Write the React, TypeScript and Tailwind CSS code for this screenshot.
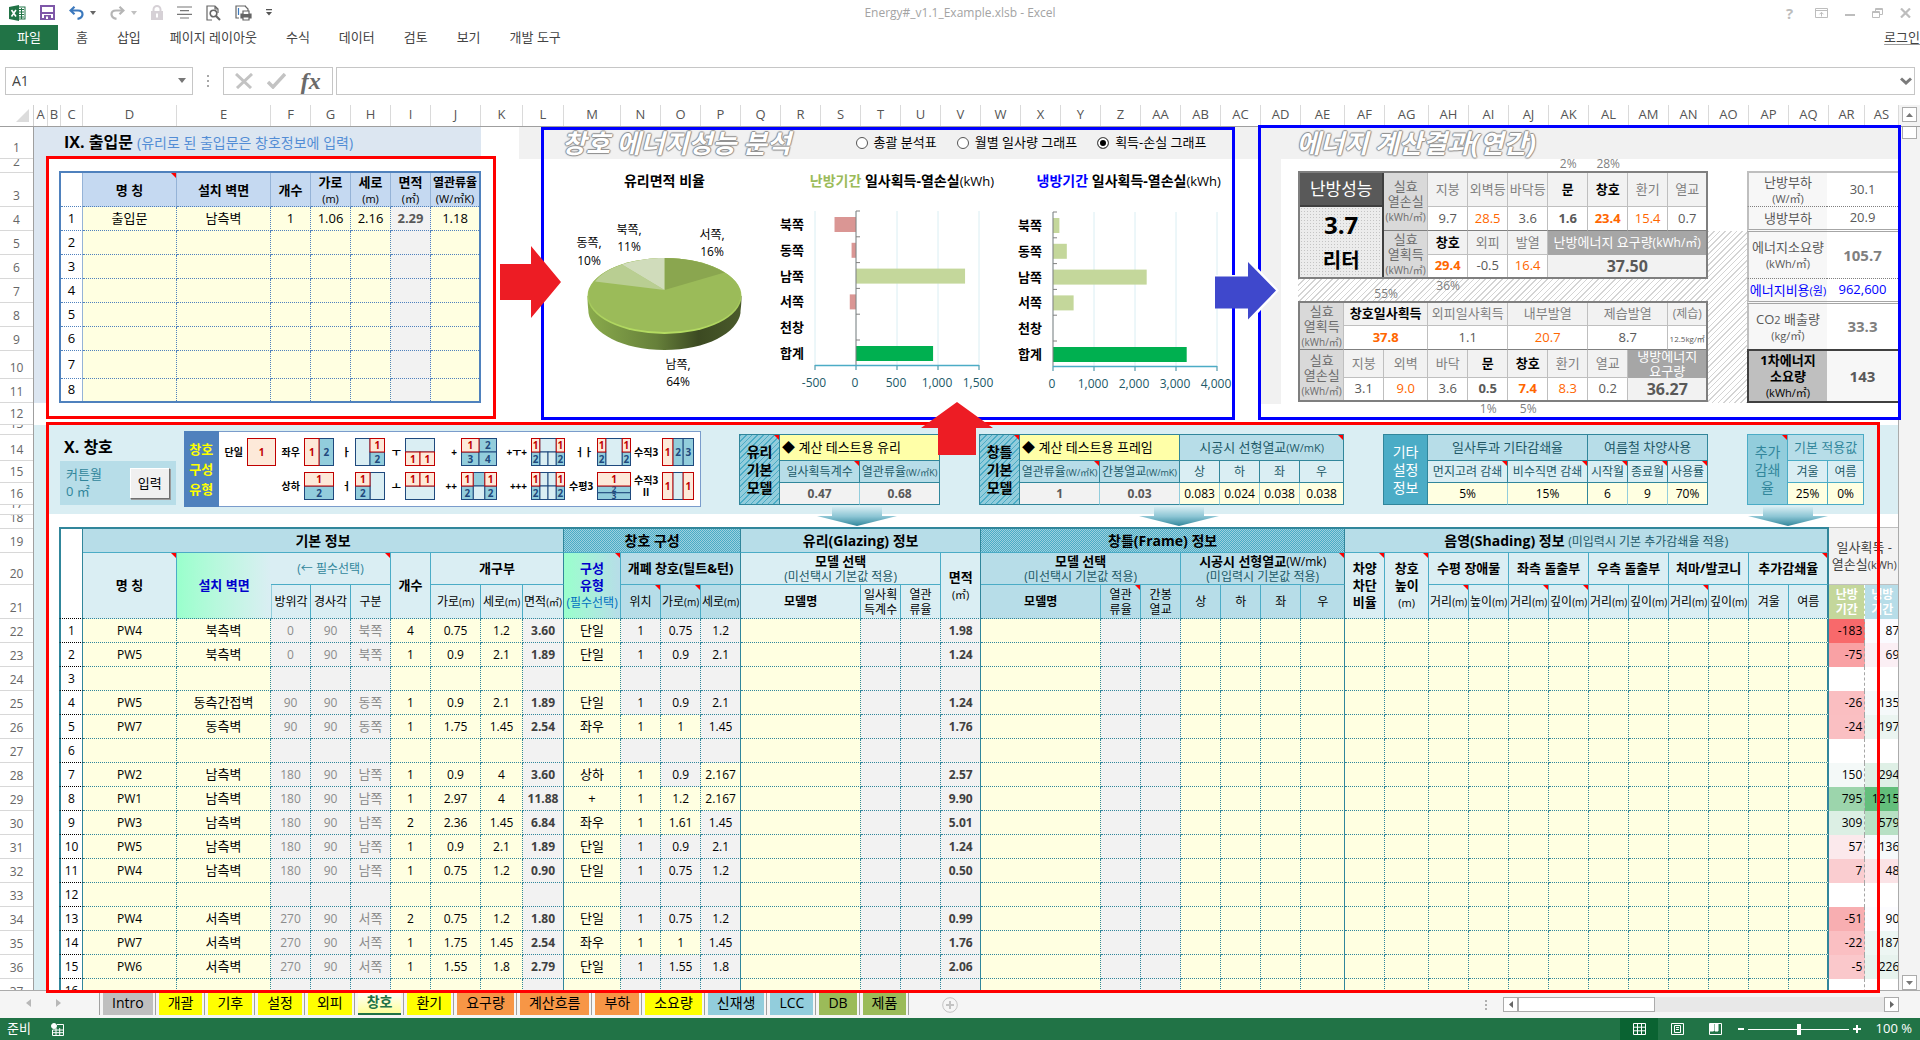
import React from "react";
import type { ReactNode } from "react";

/* ---------- shared table ---------- */

type Cell = {
  t?: ReactNode;
  cs?: number;
  rs?: number;
  c?: string;
  bold?: boolean;
  head?: boolean;
  note?: boolean;
};
type Row = { h: number; cells: Cell[] };

function NoteMark() {
  return (
    <svg className="absolute top-0 right-0 h-[5px] w-[5px]" viewBox="0 0 5 5" aria-hidden="true">
      <path d="M0 0h5v5z" fill="#ff0000" />
    </svg>
  );
}

function Grid({ cols, rows, className = "", label }: { cols: number[]; rows: Row[]; className?: string; label: string }) {
  return (
    <table aria-label={label} className={"w-full table-fixed border-separate border-spacing-0 text-center whitespace-nowrap " + className}>
      <colgroup>
        {cols.map((w, i) => (
          <col key={i} style={{ width: w }} />
        ))}
      </colgroup>
      <tbody>
        {rows.map((r, i) => (
          <tr key={i} style={{ height: r.h }}>
            {r.cells.map((cell, j) => {
              const Tag = cell.head ? "th" : "td";
              return (
                <Tag
                  key={j}
                  colSpan={cell.cs}
                  rowSpan={cell.rs}
                  className={"relative overflow-hidden p-0 align-middle " + (cell.bold ? "font-bold " : "font-normal ") + (cell.c || "")}
                >
                  {cell.t}
                  {cell.note && <NoteMark />}
                </Tag>
              );
            })}
          </tr>
        ))}
      </tbody>
    </table>
  );
}

const Lines = ({ of }: { of: ReactNode[] }) => (
  <>
    {of.map((l, i) => (
      <span key={i} className="block">
        {l}
      </span>
    ))}
  </>
);
const Sm = ({ children }: { children: ReactNode }) => <span className="text-[11px] leading-none font-normal">{children}</span>;
const Xs = ({ children }: { children: ReactNode }) => <span className="text-[9px] leading-none font-normal">{children}</span>;

/* ---------- window chrome ---------- */

function QuickAccess() {
  return (
    <div className="flex items-center gap-[14px] pl-2">
      <svg width="18" height="18" viewBox="0 0 18 18">
        <rect x="8" y="3" width="9" height="12" fill="#fff" stroke="#217346" />
        <path d="M11 5.5h5M11 8h5M11 10.5h5M11 13h5M13.5 4v11" stroke="#217346" />
        <path d="M1 3l10-2v16L1 15z" fill="#217346" />
        <path d="M3.5 6l4.5 6.5M8 6l-4.5 6.5" stroke="#fff" strokeWidth="1.6" />
      </svg>
      <svg width="15" height="15" viewBox="0 0 15 15">
        <path d="M1 1h13v13H1z" fill="#fff" stroke="#7e57a8" strokeWidth="2" />
        <path d="M1 8h13" stroke="#7e57a8" strokeWidth="2" />
        <path d="M4 10h7v5H4z" fill="#7e57a8" />
        <path d="M6 11.5h2V14H6z" fill="#fff" />
      </svg>
      <div className="flex items-center gap-1.5">
        <svg width="15" height="14" viewBox="0 0 15 14" fill="none" stroke="#3b78bd" strokeWidth="2.2">
          <path d="M5.5 0.8L1.5 4.5l4 3.8M2 4.5h7c3 0 4.5 1.5 4.5 3.8s-1.5 4-5 4.5" />
        </svg>
        <svg width="6" height="4" viewBox="0 0 6 4">
          <path d="M0 0h6L3 4z" fill="#666" />
        </svg>
      </div>
      <div className="flex items-center gap-1.5">
        <svg width="15" height="14" viewBox="0 0 15 14" fill="none" stroke="#b5b5b5" strokeWidth="2.2">
          <path d="M9.5 0.8l4 3.7-4 3.8M13 4.5H6C3 4.5 1.5 6 1.5 8.3s1.5 4 5 4.5" />
        </svg>
        <svg width="6" height="4" viewBox="0 0 6 4">
          <path d="M0 0h6L3 4z" fill="#c0c0c0" />
        </svg>
      </div>
      <svg width="12" height="15" viewBox="0 0 12 15">
        <path d="M2.5 7V4.5a3.5 3.5 0 017 0V7" fill="none" stroke="#d6d1d6" strokeWidth="2" />
        <rect y="6" width="12" height="9" fill="#d6d1d6" />
        <path d="M6 8.5v4" stroke="#fff" strokeWidth="2" />
      </svg>
      <svg width="15" height="13" viewBox="0 0 15 13" stroke="#777" strokeWidth="1.2">
        <path d="M0 1h15M3 4.7h9M0 8.4h15M3 12h9" />
      </svg>
      <svg width="15" height="16" viewBox="0 0 15 16" fill="none" stroke="#666" strokeWidth="1.2">
        <path d="M6 15H1V1h8l3 3v4M9 1v3h3" />
        <circle cx="7.5" cy="8.5" r="3.3" strokeWidth="1.6" />
        <path d="M10 11l4 4" strokeWidth="2.2" />
      </svg>
      <svg width="17" height="16" viewBox="0 0 17 16" fill="none" stroke="#666" strokeWidth="1.2">
        <path d="M4 13H1V1h6M10 1l3 3v2M7 1h4" />
        <path d="M3.5 3v7" stroke="#3b78bd" />
        <path d="M6 9h10v4H6z" fill="#666" />
        <path d="M8 9V6h6v3M8 12h6v3H8z" fill="#fff" />
      </svg>
      <svg width="6" height="7" viewBox="0 0 6 7">
        <path d="M0 0h6v1.2H0zM0 3h6L3 6.5z" fill="#555" />
      </svg>
    </div>
  );
}

function WindowIcons() {
  return (
    <div className="flex items-center gap-[17px] pr-[9px] text-[#bdbdbd]">
      <span className="w-3 text-[15px] leading-4 font-bold">?</span>
      <svg width="13" height="10" viewBox="0 0 13 10" fill="none" stroke="currentColor">
        <path d="M.5.5h12v9H.5zM.5 2.5h12M6.5 8.5v-4M4.5 6.3l2-2 2 2" />
      </svg>
      <svg width="10" height="10" viewBox="0 0 10 10">
        <path d="M0 6h10v2H0z" fill="currentColor" />
      </svg>
      <svg width="11" height="10" viewBox="0 0 11 10" fill="none" stroke="currentColor">
        <path d="M.5 3.5h7v6h-7zM.5 4.5h7M3.5 3.5v-3h7v6h-3M3.5 1.5h7" />
      </svg>
      <svg width="11" height="10" viewBox="0 0 11 10" fill="none" stroke="currentColor" strokeWidth="2.2">
        <path d="M1 .5l9 9M10 .5l-9 9" />
      </svg>
    </div>
  );
}

const MENUS = ["홈", "삽입", "페이지 레이아웃", "수식", "데이터", "검토", "보기", "개발 도구"];

function Chrome() {
  return (
    <header>
      <div className="relative flex h-[25px] items-center justify-between">
        <QuickAccess />
        <div className="absolute inset-x-0 text-center text-[12px] text-[#a3a3a3]">Energy#_v1.1_Example.xlsb - Excel</div>
        <WindowIcons />
      </div>
      <nav className="flex h-[25px] items-center gap-[29px] overflow-hidden text-[13px] text-[#444]">
        <button className="-mr-[11px] h-full bg-[#217346] px-[17px] text-white">파일</button>
        {MENUS.map((m) => (
          <button key={m} className="whitespace-nowrap">
            {m}
          </button>
        ))}
        <a href="#login" className="ml-auto whitespace-nowrap text-[#444] underline decoration-[#999] underline-offset-2">
          로그인
        </a>
      </nav>
      <div className="flex h-[55px] items-center px-[5px] pt-1.5">
        <div className="flex h-7 w-[188px] items-center border border-[#c6c6c6]">
          <input aria-label="이름 상자" defaultValue="A1" className="w-full min-w-0 pl-1.5 text-[14px] text-[#444] outline-none" />
          <svg width="8" height="5" viewBox="0 0 8 5" className="mr-1.5 shrink-0">
            <path d="M0 0h8L4 5z" fill="#777" />
          </svg>
        </div>
        <svg width="30" height="12" viewBox="0 0 30 12">
          <path d="M14 0h2v2h-2zM14 5h2v2h-2zM14 10h2v2h-2z" fill="#a8a8a8" />
        </svg>
        <div className="flex h-7 w-[110px] items-center justify-around border border-[#c6c6c6] px-1">
          <button aria-label="취소">
            <svg width="18" height="16" viewBox="0 0 18 16" stroke="#c3c3c3" strokeWidth="3" fill="none">
              <path d="M1 1l15 14M17 1L2 15" />
            </svg>
          </button>
          <button aria-label="입력">
            <svg width="19" height="16" viewBox="0 0 19 16" stroke="#c3c3c3" strokeWidth="3.5" fill="none">
              <path d="M1 9l5 5L18 1" />
            </svg>
          </button>
          <button aria-label="함수 삽입" className="font-['Liberation_Serif',serif] text-[24px] leading-6 font-bold text-[#6a6a6a] italic">
            fx
          </button>
        </div>
        <div className="ml-[3px] flex h-7 flex-1 items-center border border-[#c6c6c6]">
          <input aria-label="수식 입력줄" className="w-full min-w-0 px-2 text-[13px] outline-none" />
          <svg width="12" height="8" viewBox="0 0 12 8" className="mr-0.5 shrink-0" fill="none" stroke="#7b7b7b" strokeWidth="3">
            <path d="M1 1.5l5 4.5 5-4.5" />
          </svg>
        </div>
      </div>
    </header>
  );
}

/* ---------- sheet headings ---------- */

const COLUMNS: [string, number][] = [
  ["A", 14], ["B", 13], ["C", 22], ["D", 94], ["E", 94], ["F", 40], ["G", 40], ["H", 40], ["I", 40], ["J", 50],
  ["K", 42], ["L", 41], ["M", 57], ["N", 40], ["O", 40], ["P", 40], ["Q", 40], ["R", 40], ["S", 40], ["T", 40],
  ["U", 40], ["V", 40], ["W", 40], ["X", 40], ["Y", 40], ["Z", 40], ["AA", 40], ["AB", 40], ["AC", 40], ["AD", 40],
  ["AE", 44], ["AF", 40], ["AG", 44], ["AH", 40], ["AI", 40], ["AJ", 40], ["AK", 40], ["AL", 40], ["AM", 40], ["AN", 40],
  ["AO", 40], ["AP", 40], ["AQ", 40], ["AR", 36], ["AS", 34],
];
const ROW_HEIGHTS = [32, 14, 34, 24, 24, 24, 24, 24, 24, 28, 24, 22, 10, 26, 22, 22, 10, 14, 24, 32, 34];

function ColumnHeads() {
  return (
    <div className="flex h-[22px] shrink-0 border-b border-[#9f9f9f]">
      <div className="flex w-[34px] shrink-0 items-end justify-end border-r border-[#d0d0d0] p-1">
        <svg width="13" height="13" viewBox="0 0 13 13">
          <path d="M13 0v13H0z" fill="#dcdcdc" />
        </svg>
      </div>
      <div className="grid flex-1" style={{ gridTemplateColumns: COLUMNS.map(([, w]) => `minmax(0,${w}fr)`).join(" ") }}>
        {COLUMNS.map(([n]) => (
          <div key={n} className="border-r border-[#dadada] text-center text-[13px] leading-[18px] text-[#555]">
            {n}
          </div>
        ))}
      </div>
      <div className="flex w-[21px] shrink-0 justify-center bg-[#f3f3f3] pt-0.5">
        <button aria-label="위로" className="flex h-[15px] w-[15px] items-center justify-center border border-[#ababab] bg-white">
          <svg width="7" height="4" viewBox="0 0 7 4">
            <path d="M0 4h7L3.5 0z" fill="#777" />
          </svg>
        </button>
      </div>
    </div>
  );
}

function RowHeads() {
  return (
    <div className="w-[34px] shrink-0 overflow-hidden border-r border-[#9f9f9f]">
      {Array.from({ length: 37 }, (_, i) => (
        <div
          key={i}
          className="flex items-end justify-center overflow-hidden border-b border-[#d8d8d8] text-[12px] leading-[20px] text-[#666]"
          style={{ height: ROW_HEIGHTS[i] ?? 24 }}
        >
          {i + 1}
        </div>
      ))}
    </div>
  );
}

/* ---------- IX. doors ---------- */

const DH = "bg-[#c5d9f1] border-r border-b border-r-[#95b3d7] border-b-[#4f81bd] [border-bottom-style:dotted] text-[13px] leading-[16px]";
const DN = "bg-white border-r border-b border-r-[#95b3d7] border-b-[#4f81bd] [border-bottom-style:dotted] text-[13px]";
const DY = "bg-[#ffffe1] border-r border-b border-dotted border-[#4f81bd] text-[13px]";
const DG = "bg-[#f2f2f2] border-r border-b border-dotted border-[#4f81bd] text-[13px] text-[#595959]";

function DoorPanel() {
  const values = ["출입문", "남측벽", "1", "1.06", "2.16", "2.29", "1.18"];
  const rows: Row[] = [
    {
      h: 34,
      cells: [
        { c: DN },
        { t: "명 칭", c: DH, bold: true, head: true, note: true },
        { t: "설치 벽면", c: DH, bold: true, head: true },
        { t: "개수", c: DH, bold: true, head: true },
        { t: <Lines of={["가로", <Sm>(m)</Sm>]} />, c: DH, bold: true, head: true },
        { t: <Lines of={["세로", <Sm>(m)</Sm>]} />, c: DH, bold: true, head: true },
        { t: <Lines of={["면적", <Sm>(㎡)</Sm>]} />, c: DH, bold: true, head: true },
        { t: <Lines of={[<span className="text-[12px] leading-none">열관류율</span>, <Sm>(W/㎡K)</Sm>]} />, c: DH, bold: true, head: true },
      ],
    },
    ...Array.from({ length: 8 }, (_, i) => ({
      h: i === 6 ? 28 : i === 7 ? 22 : 24,
      cells: [
        { t: i + 1, c: DN },
        ...values.map((v, j) => ({ t: i === 0 ? v : "", c: j === 5 ? DG : DY, bold: j === 5 })),
      ],
    })),
  ];
  return (
    <section className="relative flex flex-col">
      <div className="flex min-h-0 flex-1 pb-[22px]">
        <div className="w-[14px] shrink-0 bg-[#dce6f1]" />
        <div className="min-w-0 flex-1">
          <h2 className="h-8 bg-[#dce6f1] pl-4 text-[16px] leading-[30px] font-bold whitespace-nowrap">
            IX. 출입문 <span className="text-[14px] font-normal text-[#538dd5]">(유리로 된 출입문은 창호정보에 입력)</span>
          </h2>
          <div className="pt-3 pl-[11px]">
            <Grid
              label="출입문"
              cols={[22, 94, 94, 40, 40, 40, 40, 48]}
              rows={rows}
              className="border-2 border-[#4f81bd] [&_td:last-child]:border-r-0 [&_th:last-child]:border-r-0 [&_tr:last-child_td]:border-b-0"
            />
          </div>
        </div>
      </div>
      <div className="pointer-events-none absolute top-[29px] -right-[15px] bottom-1.5 left-3 border-3 border-[#ff0000]" />
      <svg className="absolute top-[119px] -right-[80px] z-20 h-[72px] w-[61px]" viewBox="0 0 61 72">
        <path d="M0 18h31V0l30 36-30 36V54H0z" fill="#ed1c24" />
      </svg>
    </section>
  );
}

/* ---------- analysis charts ---------- */

const ORIENT = ["북쪽", "동쪽", "남쪽", "서쪽", "천창", "합계"];

function BarChart({ values, ticks, min, max, label }: { values: number[]; ticks: string[]; min: number; max: number; label: string }) {
  const left = 46;
  const width = 164;
  const x = (v: number) => left + ((v - min) / (max - min)) * width;
  const color = (v: number, i: number) => (i === 5 ? "#00b050" : v < 0 ? "#da9694" : "#c4d79b");
  return (
    <svg width="226" height="186" viewBox="0 0 226 186" role="img" aria-label={label} className="overflow-visible">
      {ticks.map((t, i) => {
        const tx = left + (i * width) / (ticks.length - 1);
        return (
          <g key={t}>
            <path d={`M${tx} 2v154`} stroke="#daeef3" />
            <path d={`M${tx} 156v5`} stroke="#31869b" />
            <text x={tx - 1} y="178" textAnchor="middle" fontSize="12" fill="#215967">
              {t}
            </text>
          </g>
        );
      })}
      {values.map((v, i) => (
        <rect key={i} x={Math.min(x(0), x(v))} y={8 + i * 25.8} width={Math.abs(x(v) - x(0))} height="15" fill={color(v, i)} />
      ))}
      <path d={`M${x(0)} 2v154` + [0, 1, 2, 3, 4, 5].map((i) => `M${x(0)} ${2 + i * 25.8}h4`).join("")} stroke="#808080" />
      <path d={`M${left} 156.5h${width}`} stroke="#4bacc6" strokeWidth="1.5" />
      {ORIENT.map((o, i) => (
        <text key={o} x="23" y={20 + i * 25.8} textAnchor="middle" fontSize="13" fontWeight="bold">
          {o}
        </text>
      ))}
    </svg>
  );
}

function PieChart() {
  return (
    <svg width="180" height="176" viewBox="0 0 180 176" role="img" aria-label="유리면적 비율" fontSize="12" textAnchor="middle" className="overflow-visible">
      <defs>
        <linearGradient id="side" x1="0" x2="1">
          <stop offset="0" stopColor="#8aab4c" />
          <stop offset="0.45" stopColor="#66803a" />
          <stop offset="0.72" stopColor="#3c4a22" />
          <stop offset="1" stopColor="#4a5a2b" />
        </linearGradient>
        <linearGradient id="rim" x1="0" y1="0" x2="0" y2="1">
          <stop offset="0.3" stopColor="#9bbb59" />
          <stop offset="1" stopColor="#b5dd62" />
        </linearGradient>
      </defs>
      <path d="M17.5 94c0 10 1 13 1 17 3 20 34 37 76 37s73-17 76-37c0-4 1-7 1-17z" fill="url(#side)" />
      <ellipse cx="94.5" cy="94" rx="77" ry="38" fill="url(#rim)" />
      <ellipse cx="94.5" cy="93" rx="76" ry="37" fill="#9bbb59" />
      <path d="M94.5 88V56c24 0 44 5 60 14.5z" fill="#8aa64f" />
      <path d="M94.5 88L25 79.5c5-7 14-12.5 27-17z" fill="#b9ce92" />
      <path d="M94.5 88L52 62.5C64 58.5 79 56 94.5 56z" fill="#d0dcbb" />
      <text x="19" y="45">동쪽,</text>
      <text x="19" y="63">10%</text>
      <text x="59" y="32">북쪽,</text>
      <text x="59" y="49">11%</text>
      <text x="142" y="37">서쪽,</text>
      <text x="142" y="54">16%</text>
      <text x="108" y="167">남쪽,</text>
      <text x="108" y="184">64%</text>
    </svg>
  );
}

const SHAPE_TEXT =
  "text-[26px] leading-8 font-bold italic whitespace-nowrap text-white [text-shadow:1px_0_1px_#8c8c8c,-1px_0_1px_#8c8c8c,0_1px_1px_#8c8c8c,0_-1px_1px_#8c8c8c]";

function AnalysisPanel() {
  const options = ["총괄 분석표", "월별 일사량 그래프", "획득-손실 그래프"];
  return (
    <section className="relative flex flex-col">
      <div className="flex h-8 items-center bg-[#f1f1f1] pl-[43px]">
        <h2 className={SHAPE_TEXT}>창호 에너지성능 분석</h2>
        <fieldset className="flex flex-1 items-center justify-end gap-5 pr-[54px]">
          {options.map((o, i) => (
            <label key={o} className="flex items-center gap-1.5 text-[13px] whitespace-nowrap">
              <input
                type="radio"
                name="view"
                defaultChecked={i === 2}
                className="h-3 w-3 appearance-none rounded-full border border-[#555] bg-white checked:bg-black checked:shadow-[inset_0_0_0_2px_white]"
              />
              {o}
            </label>
          ))}
        </fieldset>
      </div>
      <div className="grid flex-1 grid-cols-[250fr_238fr_254fr]">
        <figure className="flex flex-col items-start pt-3 pl-[51px]">
          <figcaption className="mb-[11px] w-full pl-[54px] text-[14px] leading-5 font-bold">유리면적 비율</figcaption>
          <PieChart />
        </figure>
        <figure className="pt-3">
          <figcaption className="mb-[18px] pl-[41px] text-[14px] leading-5 font-bold whitespace-nowrap">
            <span className="text-[#9bbb59]">난방기간</span> 일사획득-열손실<span className="text-[13px] font-normal">(kWh)</span>
          </figcaption>
          <BarChart label="난방기간 일사획득-열손실" values={[-262, -54, 1330, -76, 0, 940]} ticks={["-500", "0", "500", "1,000", "1,500"]} min={-500} max={1500} />
        </figure>
        <figure className="pt-3">
          <figcaption className="mb-[19px] pl-[30px] text-[14px] leading-5 font-bold whitespace-nowrap">
            <span className="text-[#0000ff]">냉방기간</span> 일사획득-열손실<span className="text-[13px] font-normal">(kWh)</span>
          </figcaption>
          <BarChart label="냉방기간 일사획득-열손실" values={[156, 337, 2285, 503, 0, 3261]} ticks={["0", "1,000", "2,000", "3,000", "4,000"]} min={0} max={4000} />
        </figure>
      </div>
      <div className="pointer-events-none absolute top-0 right-[25px] bottom-[5px] left-[22px] border-3 border-[#0000ff]" />
      <svg className="absolute top-[275px] left-[402px] z-20 h-[53px] w-[72px]" viewBox="0 0 72 53">
        <path d="M36 0l36 26H55v27H17V26H0z" fill="#ed1c24" />
      </svg>
    </section>
  );
}

/* ---------- yearly results ---------- */

const B = "border-r border-b border-[#bfbfbf] text-[13px] ";
const RH = B + "bg-[#f2f2f2] text-[#7f7f7f]";
const RHB = B + "bg-[#f2f2f2] text-black";
const RV = B + "bg-white text-[#595959]";
const RO = B + "bg-white text-[#ff6600]";
const RL = B + "bg-[#d9d9d9] text-[#6c6c6c] leading-[15px]";
const MID = " border-b-[#7f7f7f]";

const side = (a: string, b: string) => <Lines of={[a, b, <span className="text-[10px] leading-none">(kWh/㎡)</span>]} />;
const FLAT = "border-2 border-[#7f7f7f] [&_td:last-child]:border-r-0 [&_th:last-child]:border-r-0 [&_tr:last-child_td]:border-b-0";
const HATCH = "bg-[repeating-linear-gradient(135deg,#d4d4d4_0_1px,#ffffff_1px_4px)]";

const HEATING: Row[] = [
  {
    h: 34,
    cells: [
      { t: "난방성능", c: "border-r-2 border-b-2 border-[#3f3f3f] bg-[#595959] text-[17px] text-white", head: true },
      { t: side("실효", "열손실"), rs: 2, c: RL + MID },
      { t: "지붕", c: RH }, { t: "외벽등", c: RH }, { t: "바닥등", c: RH }, { t: "문", c: RHB, bold: true },
      { t: "창호", c: RHB, bold: true }, { t: "환기", c: RH }, { t: "열교", c: RH },
    ],
  },
  {
    h: 24,
    cells: [
      {
        t: <Lines of={["3.7", <span className="text-[20px] leading-none">리터</span>]} />,
        rs: 3,
        bold: true,
        c: "border-r-2 border-[#3f3f3f] bg-[radial-gradient(#c4c4c4_30%,#ececec_32%)] bg-[length:3px_3px] text-[24px] leading-[34px]",
      },
      { t: "9.7", c: RV + MID }, { t: "28.5", c: RO + MID }, { t: "3.6", c: RV + MID }, { t: "1.6", c: RV + MID, bold: true },
      { t: "23.4", c: RO + MID, bold: true }, { t: "15.4", c: RO + MID }, { t: "0.7", c: RV + MID },
    ],
  },
  {
    h: 24,
    cells: [
      { t: side("실효", "열획득"), rs: 2, c: RL + " border-b-0" },
      { t: "창호", c: RHB, bold: true }, { t: "외피", c: RH }, { t: "발열", c: RH },
      { t: <>난방에너지 요구량<span className="text-[12px]">(kWh/㎡)</span></>, cs: 4, c: "bg-[#a6a6a6] text-[13px] text-white" },
    ],
  },
  {
    h: 22,
    cells: [
      { t: "29.4", c: RO, bold: true }, { t: "-0.5", c: RV }, { t: "16.4", c: RO },
      { t: "37.50", cs: 4, c: "bg-[#f2f2f2] text-[16px] leading-5 text-[#595959]", bold: true },
    ],
  },
];

const COOLING: Row[] = [
  {
    h: 23,
    cells: [
      { t: side("실효", "열획득"), rs: 2, c: RL + MID },
      { t: "창호일사획득", cs: 2, c: RHB, bold: true }, { t: "외피일사획득", cs: 2, c: RH }, { t: "내부발열", cs: 2, c: RH },
      { t: "제습발열", cs: 2, c: RH }, { t: <span className="text-[12px]">(제습)</span>, c: RH },
    ],
  },
  {
    h: 24,
    cells: [
      { t: "37.8", cs: 2, c: RO + MID, bold: true }, { t: "1.1", cs: 2, c: RV + MID }, { t: "20.7", cs: 2, c: RO + MID },
      { t: "8.7", cs: 2, c: RV + MID }, { t: <span className="text-[8px]">12.5kg/㎡</span>, c: RV + MID },
    ],
  },
  {
    h: 28,
    cells: [
      { t: side("실효", "열손실"), rs: 2, c: RL + " border-b-0" },
      { t: "지붕", c: RH }, { t: "외벽", c: RH }, { t: "바닥", c: RH }, { t: "문", c: RHB, bold: true },
      { t: "창호", c: RHB, bold: true }, { t: "환기", c: RH }, { t: "열교", c: RH },
      { t: <div className="flex h-[27px] flex-col justify-center overflow-hidden"><Lines of={["냉방에너지", "요구량"]} /></div>, cs: 2, c: "bg-[#a6a6a6] text-[13px] leading-[15px] text-white" },
    ],
  },
  {
    h: 22,
    cells: [
      { t: "3.1", c: RV }, { t: "9.0", c: RO }, { t: "3.6", c: RV }, { t: "0.5", c: RV, bold: true },
      { t: "7.4", c: RO, bold: true }, { t: "8.3", c: RO }, { t: "0.2", c: RV },
      { t: "36.27", cs: 2, c: "bg-[#f2f2f2] text-[16px] leading-5 text-[#595959]", bold: true },
    ],
  },
];

const SL = "border-l-2 border-l-[#bfbfbf] [border-left-style:solid] bg-[#f7f7f7] text-[13px] leading-[16px] text-[#595959] ";
const DOT = "border-b border-b-[#7f7f7f] [border-bottom-style:dotted] ";
const DBL = "border-b-[3px] border-b-[#a6a6a6] [border-bottom-style:double] ";

const SUMMARY: Row[] = [
  { h: 36, cells: [{ t: <Lines of={["난방부하", <Sm>(W/㎡)</Sm>]} />, c: SL + DOT + "border-t-2 border-t-[#bfbfbf]" }, { t: "30.1", c: DOT + "border-t-2 border-t-[#bfbfbf] text-[13px] text-[#595959]" }] },
  { h: 25, cells: [{ t: "냉방부하", c: SL + DBL }, { t: "20.9", c: DBL + "text-[13px] text-[#595959]" }] },
  { h: 47, cells: [{ t: <Lines of={["에너지소요량", <Sm>(kWh/㎡)</Sm>]} />, c: SL + DOT }, { t: "105.7", c: DOT + "text-[15px] text-[#7f7f7f]", bold: true }] },
  { h: 25, cells: [{ t: <>에너지비용<Sm>(원)</Sm></>, c: SL + DBL + "text-[#0000ff]!" }, { t: "962,600", c: DBL + "text-[13px] text-[#0000ff]" }] },
  { h: 45, cells: [{ t: <Lines of={[<>CO<Sm>2</Sm> 배출량</>, <Sm>(kg/㎡)</Sm>]} />, c: SL }, { t: "33.3", c: "text-[15px] text-[#7f7f7f]", bold: true }] },
  {
    h: 54,
    cells: [
      { t: <Lines of={["1차에너지", "소요량", <Sm>(kWh/㎡)</Sm>]} />, c: "border-y-2 border-l-2 border-[#404040] bg-[#bfbfbf] text-[13px] leading-[16px] text-black", bold: true },
      { t: "143", c: "border-y-2 border-[#404040] bg-[#f7f7f7] text-[15px] text-[#595959]", bold: true },
    ],
  },
];

function ResultPanel() {
  const pct = "text-[12px] leading-[14px] text-[#7f7f7f] text-center";
  return (
    <section className="relative flex flex-col">
      <div className="flex h-8 items-center bg-[#f1f1f1] pl-[36px]">
        <h2 className={SHAPE_TEXT}>에너지 계산결과(연간)</h2>
      </div>
      <div className="grid flex-1 grid-cols-[21fr_17fr_410fr_39fr_151fr]">
        <div className="mb-[21px] bg-[#f1f1f1]" />
        <div />
        <div>
          <div className="grid h-3 grid-cols-[250fr_40fr_40fr_80fr]">
            <span />
            <span className={"-mt-0.5 " + pct}>2%</span>
            <span className={"-mt-0.5 " + pct}>28%</span>
          </div>
          <Grid label="난방성능" cols={[84, 44, 40, 40, 40, 40, 40, 40, 38]} rows={HEATING} className={FLAT} />
          <div className={"grid h-[22px] grid-cols-[68fr_40fr_22fr_40fr_240fr] " + HATCH}>
            <span />
            <span className={"self-end " + pct}>55%</span>
            <span />
            <span className={pct}>36%</span>
          </div>
          <Grid label="냉방성능" cols={[44, 40, 44, 40, 40, 40, 40, 40, 40, 38]} rows={COOLING} className={FLAT} />
          <div className="grid grid-cols-[170fr_40fr_40fr_160fr]">
            <span />
            <span className={pct}>1%</span>
            <span className={pct}>5%</span>
          </div>
        </div>
        <div className={"mt-[72px] mb-[22px] " + HATCH} />
        <div className="pt-3">
          <Grid label="부하 및 소요량" cols={[80, 71]} rows={SUMMARY} />
        </div>
      </div>
      <div className="pointer-events-none absolute -top-0.5 -right-[3px] bottom-[5px] -left-0.5 border-3 border-[#0000ff]" />
      <svg className="absolute top-[131px] -left-[45px] z-20 h-[66px] w-[64px]" viewBox="0 0 64 66">
        <path d="M0 17h33V0l31 32.5L33 66V49H0z" fill="#fff" />
        <path d="M0 18.5h33V4l28 28.5-28 29V50.5H0z" fill="#3f48cc" />
      </svg>
    </section>
  );
}

/* ---------- X. window types ---------- */

/* Pane: x, y, width, height as parts of 12, tone (r = opening, b = fixed, l = light) and number. */
type Pane = [number, number, number, number, "r" | "b" | "l", string?];
const TONE = { r: ["#fde9d9", "#c00000", "#c00000"], b: ["#92cddc", "#1f497d", "#1f497d"], l: ["#daeef3", "#1f497d", "#1f497d"] };

const TYPES: { label: ReactNode; w: number; panes: Pane[] }[] = [
  { label: "단일", w: 29, panes: [[0, 0, 12, 12, "r", "1"]] },
  { label: "좌우", w: 30, panes: [[6, 0, 6, 12, "b", "2"], [0, 0, 6, 12, "r", "1"]] },
  { label: "ㅏ", w: 30, panes: [[0, 0, 6, 12, "l"], [6, 6, 6, 6, "b", "2"], [6, 0, 6, 6, "r", "1"]] },
  { label: "ㅜ", w: 30, panes: [[0, 0, 12, 6, "l"], [0, 6, 6, 6, "r", "1"], [6, 6, 6, 6, "r", "1"]] },
  { label: "+", w: 36, panes: [[6, 0, 6, 6, "b", "2"], [0, 6, 6, 6, "b", "3"], [6, 6, 6, 6, "b", "4"], [0, 0, 6, 6, "r", "1"]] },
  { label: "+ㅜ+", w: 34, panes: [[3, 0, 6, 6, "l"], [3, 6, 3, 6, "l"], [6, 6, 3, 6, "l"], [0, 6, 3, 6, "b", "2"], [9, 6, 3, 6, "b", "2"], [0, 0, 3, 6, "r", "1"], [9, 0, 3, 6, "r", "1"]] },
  { label: "ㅓㅏ", w: 34, panes: [[3, 0, 6, 12, "l"], [0, 6, 3, 6, "b", "2"], [9, 6, 3, 6, "b", "2"], [0, 0, 3, 6, "r", "1"], [9, 0, 3, 6, "r", "1"]] },
  { label: "수직3", w: 32, panes: [[4, 0, 4, 12, "b", "2"], [8, 0, 4, 12, "b", "3"], [0, 0, 4, 12, "r", "1"]] },
  { label: "", w: 0, panes: [] },
  { label: "상하", w: 30, panes: [[0, 6, 12, 6, "b", "2"], [0, 0, 12, 6, "r", "1"]] },
  { label: "ㅓ", w: 30, panes: [[6, 0, 6, 12, "l"], [0, 6, 6, 6, "b", "2"], [0, 0, 6, 6, "r", "1"]] },
  { label: "ㅗ", w: 30, panes: [[0, 6, 12, 6, "l"], [0, 0, 6, 6, "r", "1"], [6, 0, 6, 6, "r", "1"]] },
  { label: "++", w: 36, panes: [[4, 0, 4, 6, "b"], [4, 6, 4, 6, "l"], [0, 6, 4, 6, "b", "2"], [8, 6, 4, 6, "b", "2"], [0, 0, 4, 6, "r", "1"], [8, 0, 4, 6, "r", "1"]] },
  { label: "+++", w: 34, panes: [[3, 0, 3, 6, "l"], [6, 0, 3, 6, "l"], [3, 6, 3, 6, "l"], [6, 6, 3, 6, "l"], [0, 6, 3, 6, "b", "2"], [9, 6, 3, 6, "b", "2"], [0, 0, 3, 6, "r", "1"], [9, 0, 3, 6, "r", "1"]] },
  { label: "수평3", w: 34, panes: [[0, 6, 12, 3, "b", "2"], [0, 9, 12, 3, "b", "3"], [0, 0, 12, 6, "r", "1"]] },
  { label: <Lines of={["수직3", "II"]} />, w: 32, panes: [[4, 0, 4, 12, "l"], [0, 0, 4, 12, "r", "1"], [8, 0, 4, 12, "r", "1"]] },
];

function WindowGlyph({ w, panes }: { w: number; panes: Pane[] }) {
  const ux = (w - 1) / 12;
  const uy = 27 / 12;
  return (
    <svg width={w} height="28" viewBox={`0 0 ${w} 28`} className="shrink-0">
      {panes.map(([x, y, pw, ph, tone, n], i) => (
        <g key={i}>
          <rect x={0.5 + x * ux} y={0.5 + y * uy} width={pw * ux} height={ph * uy} fill={TONE[tone][0]} stroke={TONE[tone][1]} />
          {n && (
            <text x={0.5 + (x + pw / 2) * ux} y={(ph < 6 ? 3.5 : 4.5) + (y + ph / 2) * uy} textAnchor="middle" fontSize={ph < 6 ? 8 : 10} fontWeight="bold" fill={TONE[tone][2]}>
              {n}
            </text>
          )}
        </g>
      ))}
    </svg>
  );
}

function TypeLegend() {
  return (
    <div className="mt-1.5 flex h-[76px] border border-[#7a9ccb] bg-white">
      <div className="-m-px flex w-[35px] shrink-0 flex-col justify-center bg-[#4f81bd] text-center text-[13px] leading-5 font-bold text-[#ffff00]">
        <span>창호</span>
        <span>구성</span>
        <span>유형</span>
      </div>
      <div className="grid flex-1 grid-cols-[58fr_58fr_51fr_50fr_62fr_68fr_66fr_63fr] gap-y-1.5 pt-1.5 pr-1.5 pb-1.5">
        {TYPES.map((t, i) => (
          <div key={i} className="flex items-center justify-end gap-1 text-center text-[10px] leading-3 font-bold whitespace-nowrap">
            <span>{t.label}</span>
            <WindowGlyph w={t.w} panes={t.panes} />
          </div>
        ))}
      </div>
    </div>
  );
}

/* ---------- default model tables ---------- */

const TB = "border-r border-b border-[#31869b] ";
const SOFT = "border-r border-b border-[#31869b] border-r-[#92cddc] ";
const DIAG = "border border-[#31869b] bg-[repeating-linear-gradient(135deg,#4bacc6_0_1px,#92cddc_1px_4px)] text-[14px] leading-[18px] text-black";
const H1 = "border-t bg-[#b7dde8] text-[13px] text-[#215967]";
const H2 = "bg-[#b7dde8] text-[12px] text-[#215967]";
const H3 = "bg-[#daeef3] text-[12px] text-[#215967]";
const VG = "bg-[#f2f2f2] text-[12px] text-[#595959]";
const VY = "bg-[#ffffe1] text-[12px] text-black";

function DownArrow({ className }: { className: string }) {
  return (
    <svg className={"absolute top-[82px] z-10 h-[19px] w-[80px] " + className} viewBox="0 0 80 19" aria-hidden="true">
      <defs>
        <linearGradient id="teal" x1="0" y1="0" x2="0" y2="1">
          <stop offset="0" stopColor="#d3ebf1" />
          <stop offset="0.5" stopColor="#8cc5d4" />
          <stop offset="1" stopColor="#31869b" />
        </linearGradient>
      </defs>
      <path d="M15 0h50v9h15L40 19 0 9h15z" fill="url(#teal)" />
    </svg>
  );
}

const GLAZING: Row[] = [
  {
    h: 27,
    cells: [
      { t: <Lines of={["유리", "기본", "모델"]} />, rs: 3, c: DIAG, note: true, head: true, bold: true },
      { t: "◆ 계산 테스트용 유리", cs: 2, c: TB + "border-t bg-[#ffffa8] pl-0.5 text-left text-[13px] text-black" },
    ],
  },
  { h: 22, cells: [{ t: "일사획득계수", c: TB + H2, note: true }, { t: <>열관류율<Xs>(W/㎡K)</Xs></>, c: TB + H2 }] },
  { h: 22, cells: [{ t: "0.47", c: SOFT + VG, bold: true }, { t: "0.68", c: TB + VG, bold: true }] },
];
const FRAME: Row[] = [
  {
    h: 27,
    cells: [
      { t: <Lines of={["창틀", "기본", "모델"]} />, rs: 3, c: DIAG, note: true, head: true, bold: true },
      { t: "◆ 계산 테스트용 프레임", cs: 2, c: TB + "border-t bg-[#ffffa8] pl-0.5 text-left text-[13px] text-black" },
      { t: <>시공시 선형열교<Sm>(W/mK)</Sm></>, cs: 4, c: TB + H1, note: true },
    ],
  },
  {
    h: 22,
    cells: [
      { t: <>열관류율<Xs>(W/㎡K)</Xs></>, c: TB + H2, note: true }, { t: <>간봉열교<Xs>(W/mK)</Xs></>, c: TB + H2 },
      { t: "상", c: TB + H3 }, { t: "하", c: TB + H3 }, { t: "좌", c: TB + H3 }, { t: "우", c: TB + H3 },
    ],
  },
  {
    h: 22,
    cells: [
      { t: "1", c: SOFT + VG, bold: true }, { t: "0.03", c: SOFT + VG, bold: true },
      { t: "0.083", c: SOFT + VY }, { t: "0.024", c: SOFT + VY }, { t: "0.038", c: SOFT + VY }, { t: "0.038", c: TB + VY },
    ],
  },
];
const MISC: Row[] = [
  {
    h: 27,
    cells: [
      { t: <Lines of={["기타", "설정", "정보"]} />, rs: 3, c: "border border-[#31869b] bg-[#4bacc6] text-[14px] leading-[18px] text-white", head: true },
      { t: "일사투과 기타감쇄율", cs: 2, c: TB + H1 }, { t: "여름철 차양사용", cs: 3, c: TB + H1 },
    ],
  },
  {
    h: 22,
    cells: ["먼지고려 감쇄", "비수직면 감쇄", "시작월", "종료월", "사용률"].map((t) => ({ t, c: TB + H3, note: true })),
  },
  { h: 22, cells: [{ t: "5%", c: SOFT + VY }, { t: "15%", c: TB + VY }, { t: "6", c: SOFT + VY }, { t: "9", c: SOFT + VY }, { t: "70%", c: TB + VY }] },
];
const EXTRA: Row[] = [
  {
    h: 27,
    cells: [
      { t: <Lines of={["추가", "감쇄", "율"]} />, rs: 3, c: "border border-[#4bacc6] bg-[#92cddc] text-[14px] leading-[18px] text-[#31869b]", note: true, head: true },
      { t: "기본 적용값", cs: 2, c: "border-t border-r border-b border-[#4bacc6] bg-[#b7dde8] text-[13px] text-[#31869b]" },
    ],
  },
  { h: 22, cells: [{ t: "겨울", c: "border-r border-b border-[#4bacc6] " + H3 }, { t: "여름", c: "border-r border-b border-[#4bacc6] " + H3 }] },
  { h: 22, cells: [{ t: "25%", c: "border-r border-b border-[#4bacc6] " + VY }, { t: "0%", c: "border-r border-b border-[#4bacc6] " + VY }] },
];

function ModelBand() {
  return (
    <div className="grid h-[89px] grid-cols-[150fr_518fr_38fr_201fr_39fr_365fr_39fr_325fr_39fr_117fr_34fr] bg-[#daeef3]">
      <div className="pr-2 pl-[26px]">
        <h2 className="pt-2 pl-1 text-[16px] leading-7 font-bold">X. 창호</h2>
        <div className="flex h-11 items-center justify-between bg-[#b7dde8] px-1.5 text-[13px] leading-[17px] text-[#31869b]">
          <span>
            커튼월
            <br />0 ㎡
          </span>
          <button className="h-[31px] w-10 border border-t-white border-r-[#707070] border-b-[#707070] border-l-white bg-[#f0f0f0] text-[13px] text-black shadow-[1px_1px_0_#9a9a9a]">
            입력
          </button>
        </div>
      </div>
      <TypeLegend />
      <div />
      <div className="relative pt-[9px]">
        <Grid label="유리 기본 모델" cols={[41, 80, 80]} rows={GLAZING} />
        <DownArrow className="left-[78px]" />
      </div>
      <div />
      <div className="relative pt-[9px]">
        <Grid label="창틀 기본 모델" cols={[41, 80, 80, 40, 40, 40, 44]} rows={FRAME} />
        <DownArrow className="left-[160px]" />
      </div>
      <div />
      <div className="pt-[9px]">
        <Grid label="기타 설정 정보" cols={[45, 80, 80, 40, 40, 40]} rows={MISC} />
      </div>
      <div />
      <div className="relative pt-[9px]">
        <Grid label="추가 감쇄율" cols={[41, 40, 36]} rows={EXTRA} />
        <DownArrow className="left-px" />
      </div>
    </div>
  );
}

/* ---------- main window table ---------- */

const TOP = "border-t-2 border-t-[#31869b] border-r border-r-[#31869b] border-b border-b-[#4bacc6] text-[14px] ";
const CHECK = "bg-[repeating-conic-gradient(#4bacc6_0_25%,#9ed0de_0_50%)] bg-[length:2px_2px]";
const HB = "border-r border-b border-[#4bacc6] text-[13px] leading-[17px] ";
const HX = "border-r border-b border-b-[#31869b] [border-bottom-style:dotted] border-r-[#4bacc6] text-[13px] leading-[17px] ";
const END = "border-r-[#31869b]! ";
const PALE = "bg-[#daeef3] ";
const MEDIUM = "bg-[#b7dde8] ";

const m = (a: string, u = "(m)") => (
  <span className="text-[12px]">
    {a}
    <span className="text-[10px]">{u}</span>
  </span>
);
const s12 = (t: ReactNode) => <span className="text-[12px] leading-[15px]">{t}</span>;

const MAIN_HEAD: Row[] = [
  {
    h: 26,
    cells: [
      { rs: 3, c: "border-t-2 border-l-2 border-r border-b border-[#31869b] [border-bottom-style:dotted] border-b-black bg-white" },
      { t: "기본 정보", cs: 9, c: TOP + MEDIUM, bold: true, head: true },
      { t: "창호 구성", cs: 4, c: TOP + CHECK, bold: true, head: true },
      { t: "유리(Glazing) 정보", cs: 4, c: TOP + MEDIUM, bold: true, head: true },
      { t: "창틀(Frame) 정보", cs: 7, c: TOP + CHECK, bold: true, head: true },
      { t: <>음영(Shading) 정보 <span className="text-[12px] font-normal text-[#215967]">(미입력시 기본 추가감쇄율 적용)</span></>, cs: 12, c: TOP + MEDIUM + "border-r-2", bold: true, head: true },
      {
        t: <Lines of={["일사획득 -", <>열손실<Sm>(kWh)</Sm></>]} />,
        cs: 2,
        rs: 2,
        c: "border-t border-b border-[#bfbfbf] bg-[#f2f2f2] text-[13px] leading-[17px] text-[#404040]",
      },
    ],
  },
  {
    h: 32,
    cells: [
      { t: "명 칭", rs: 2, c: HX + PALE, bold: true, head: true, note: true },
      { t: "설치 벽면", rs: 2, c: HX + "border-r-0 bg-linear-to-r from-[#99ffcc] to-[#daeef3] text-[#0000cc]", bold: true, head: true },
      { t: "(← 필수선택)", cs: 3, c: HB + PALE + "text-[12px]! text-[#31869b]", note: true, head: true },
      { t: "개수", rs: 2, c: HX + PALE, bold: true, head: true },
      { t: "개구부", cs: 3, c: HB + PALE + END, bold: true, head: true },
      {
        t: <Lines of={["구성", "유형", <span className="text-[12px] font-normal text-[#0070c0]">(필수선택)</span>]} />,
        rs: 2,
        c: HX + "bg-linear-to-r from-[#99ffcc] to-[#b7dde8] text-[#0000cc]",
        bold: true,
        head: true,
        note: true,
      },
      { t: "개폐 창호(틸트&턴)", cs: 3, c: HB + MEDIUM + END, bold: true, head: true },
      { t: <Lines of={[<b>모델 선택</b>, <span className="text-[12px] text-[#215967]">(미선택시 기본값 적용)</span>]} />, cs: 3, c: HB + PALE + "leading-[15px]!", head: true },
      { t: <Lines of={["면적", <Sm>(㎡)</Sm>]} />, rs: 2, c: HX + PALE + END, bold: true, head: true },
      { t: <Lines of={[<b>모델 선택</b>, <span className="text-[12px] text-[#215967]">(미선택시 기본값 적용)</span>]} />, cs: 3, c: HB + MEDIUM + "leading-[15px]!", head: true },
      {
        t: <Lines of={[<><b>시공시 선형열교</b><span className="text-[12px]">(W/mk)</span></>, <span className="text-[12px] text-[#215967]">(미입력시 기본값 적용)</span>]} />,
        cs: 4,
        c: HB + MEDIUM + END + "leading-[15px]!",
        head: true,
        note: true,
      },
      { t: <Lines of={["차양", "차단", "비율"]} />, rs: 2, c: HX + PALE, bold: true, head: true, note: true },
      { t: <Lines of={["창호", "높이", <Sm>(m)</Sm>]} />, rs: 2, c: HX + PALE, bold: true, head: true, note: true },
      { t: "수평 장애물", cs: 2, c: HB + PALE, bold: true, head: true },
      { t: "좌측 돌출부", cs: 2, c: HB + PALE, bold: true, head: true },
      { t: "우측 돌출부", cs: 2, c: HB + PALE, bold: true, head: true },
      { t: "처마/발코니", cs: 2, c: HB + PALE, bold: true, head: true },
      { t: "추가감쇄율", cs: 2, c: HB + PALE + END + "border-r-2", bold: true, head: true, note: true },
    ],
  },
  {
    h: 34,
    cells: [
      { t: s12("방위각"), c: HX + PALE + "border-l border-l-[#92cddc]", head: true },
      { t: s12("경사각"), c: HX + PALE, head: true },
      { t: s12("구분"), c: HX + PALE, head: true },
      { t: m("가로"), c: HX + PALE, head: true },
      { t: m("세로"), c: HX + PALE, head: true },
      { t: m("면적", "(㎡)"), c: HX + PALE + END, head: true },
      { t: s12("위치"), c: HX + MEDIUM, head: true, note: true },
      { t: m("가로"), c: HX + MEDIUM, head: true, note: true },
      { t: m("세로"), c: HX + MEDIUM + END, head: true },
      { t: s12("모델명"), c: HX + PALE, bold: true, head: true },
      { t: s12(<Lines of={["일사획", "득계수"]} />), c: HX + PALE + "leading-[15px]!", head: true },
      { t: s12(<Lines of={["열관", "류율"]} />), c: HX + PALE + "leading-[15px]!", head: true },
      { t: s12("모델명"), c: HX + MEDIUM, bold: true, head: true },
      { t: s12(<Lines of={["열관", "류율"]} />), c: HX + MEDIUM + "leading-[15px]!", head: true, note: true },
      { t: s12(<Lines of={["간봉", "열교"]} />), c: HX + MEDIUM + "leading-[15px]!", head: true },
      { t: s12("상"), c: HX + MEDIUM, head: true },
      { t: s12("하"), c: HX + MEDIUM, head: true },
      { t: s12("좌"), c: HX + MEDIUM, head: true },
      { t: s12("우"), c: HX + MEDIUM + END, head: true },
      { t: m("거리"), c: HX + PALE, head: true, note: true },
      { t: m("높이"), c: HX + PALE, head: true },
      { t: m("거리"), c: HX + PALE, head: true, note: true },
      { t: m("깊이"), c: HX + PALE, head: true, note: true },
      { t: m("거리"), c: HX + PALE, head: true },
      { t: m("깊이"), c: HX + PALE, head: true },
      { t: m("거리"), c: HX + PALE, head: true, note: true },
      { t: m("깊이"), c: HX + PALE, head: true },
      { t: s12("겨울"), c: HX + PALE, head: true },
      { t: s12("여름"), c: HX + PALE + END + "border-r-2", head: true },
      { t: s12(<Lines of={["난방", "기간"]} />), c: "border-r border-dashed border-white bg-[#c4d79b] leading-[15px] text-white", bold: true, head: true },
      { t: s12(<Lines of={["냉방", "기간"]} />), c: "bg-[#b7dde8] leading-[15px] text-white", bold: true, head: true },
    ],
  },
];

/* name, wall, azimuth, side, count, width, height, area, type, sash width, sash height, glass area, heating, cooling */
const WINDOWS: (string[] | null)[] = [
  ["PW4", "북측벽", "0", "북쪽", "4", "0.75", "1.2", "3.60", "단일", "0.75", "1.2", "1.98", "-183", "87"],
  ["PW5", "북측벽", "0", "북쪽", "1", "0.9", "2.1", "1.89", "단일", "0.9", "2.1", "1.24", "-75", "69"],
  null,
  ["PW5", "동측간접벽", "90", "동쪽", "1", "0.9", "2.1", "1.89", "단일", "0.9", "2.1", "1.24", "-26", "135"],
  ["PW7", "동측벽", "90", "동쪽", "1", "1.75", "1.45", "2.54", "좌우", "1", "1.45", "1.76", "-24", "197"],
  null,
  ["PW2", "남측벽", "180", "남쪽", "1", "0.9", "4", "3.60", "상하", "0.9", "2.167", "2.57", "150", "294"],
  ["PW1", "남측벽", "180", "남쪽", "1", "2.97", "4", "11.88", "+", "1.2", "2.167", "9.90", "795", "1215"],
  ["PW3", "남측벽", "180", "남쪽", "2", "2.36", "1.45", "6.84", "좌우", "1.61", "1.45", "5.01", "309", "579"],
  ["PW5", "남측벽", "180", "남쪽", "1", "0.9", "2.1", "1.89", "단일", "0.9", "2.1", "1.24", "57", "136"],
  ["PW4", "남측벽", "180", "남쪽", "1", "0.75", "1.2", "0.90", "단일", "0.75", "1.2", "0.50", "7", "48"],
  null,
  ["PW4", "서측벽", "270", "서쪽", "2", "0.75", "1.2", "1.80", "단일", "0.75", "1.2", "0.99", "-51", "90"],
  ["PW7", "서측벽", "270", "서쪽", "1", "1.75", "1.45", "2.54", "좌우", "1", "1.45", "1.76", "-22", "187"],
  ["PW6", "서측벽", "270", "서쪽", "1", "1.55", "1.8", "2.79", "단일", "1.55", "1.8", "2.06", "-5", "226"],
  null,
];

const HEAT_COLOR: Record<string, string> = {
  "-183": "bg-[#f8696b]", "-75": "bg-[#f9a1a4]", "-26": "bg-[#fabec1]", "-24": "bg-[#fabfc2]", "150": "bg-[#f4f9f8]",
  "795": "bg-[#9cd5ac]", "309": "bg-[#dcefe4]", "57": "bg-[#fbe9ec]", "7": "bg-[#facdd0]", "-51": "bg-[#f8aeb1]",
  "-22": "bg-[#fabfc2]", "-5": "bg-[#fac8cb]", "87": "bg-[#fbfbff]", "69": "bg-[#fbeff4]", "135": "bg-[#f5f9fa]",
  "197": "bg-[#ebf5f1]", "294": "bg-[#dff0e6]", "1215": "bg-[#63be7b]", "579": "bg-[#b7e0c4]", "136": "bg-[#f5f9fa]",
  "48": "bg-[#fbe3e6]", "90": "bg-[#fcfcff]", "187": "bg-[#edf6f3]", "226": "bg-[#e7f3ee]",
};

const BODY = "border-r border-b border-dotted border-[#31869b] ";
const Y = BODY + "bg-[#ffffe1] ";
const G = BODY + "bg-[#f2f2f2] ";
const SOLID = "[border-right-style:solid] ";

function bodyRow(w: string[] | null, i: number): Row {
  const v = (n: number) => (w ? w[n] : "");
  const type = v(8);
  const yellow = type === "+" ? "NOP" : type === "좌우" ? "NO" : type === "상하" ? "NP" : "";
  const pick = (col: string) => (yellow.includes(col) ? Y : G);
  const cells: Cell[] = [
    { t: i + 1, c: "border-l-2 border-r border-b border-[#31869b] border-b-black [border-bottom-style:dotted] bg-white", head: true },
    { t: v(0), c: Y },
    { t: <span className="text-[13px]">{v(1)}</span>, c: Y },
    { t: v(2), c: G + "text-[#8c8c8c]" },
    { t: w ? "90" : "", c: G + "text-[#8c8c8c]" },
    { t: <span className="text-[13px]">{v(3)}</span>, c: G + "text-[#8c8c8c]" },
    { t: v(4), c: Y },
    { t: v(5), c: Y },
    { t: v(6), c: Y },
    { t: v(7), c: G + SOLID + "text-[#404040]", bold: true },
    { t: <span className="text-[13px]">{type}</span>, c: Y },
    { t: w ? "1" : "", c: pick("N") },
    { t: v(9), c: pick("O") },
    { t: v(10), c: pick("P") + SOLID },
    { c: Y },
    { c: G },
    { c: G },
    { t: v(11), c: G + SOLID + "text-[#404040]", bold: true },
    { c: Y },
    { c: G },
    { c: G },
    { c: Y },
    { c: Y },
    { c: Y },
    { c: Y + SOLID },
    ...Array.from({ length: 11 }, () => ({ c: Y })),
    { c: Y + SOLID + "border-r-2" },
    { t: v(12), c: "border-r border-dashed border-[#a6a6a6] pr-0.5 text-right " + (HEAT_COLOR[v(12)] || "") },
    { t: v(13), c: "text-right " + (HEAT_COLOR[v(13)] || "") },
  ];
  return { h: 24, cells };
}

const MAIN_COLS = [24, 94, 94, 40, 40, 40, 40, 50, 42, 41, 57, 40, 40, 40, 120, 40, 40, 40, 120, 40, 40, 40, 40, 40, 44, 40, 44, 40, 40, 40, 40, 40, 40, 40, 40, 40, 40, 36, 34];

function WindowSection() {
  return (
    <section className="relative min-h-0 flex-1">
      <div className="absolute inset-0 overflow-hidden">
        <ModelBand />
        <div className="flex">
          <div className="w-[14px] shrink-0 bg-[#daeef3]" />
          <div className="min-w-0 flex-1 pt-[13px] pl-[11px]">
            <Grid label="창호" cols={MAIN_COLS} rows={[...MAIN_HEAD, ...WINDOWS.map(bodyRow)]} className="text-[12px]" />
          </div>
        </div>
      </div>
      <div className="pointer-events-none absolute -top-[3px] right-[18px] -bottom-[3px] left-3 z-10 border-3 border-[#ff0000]" />
    </section>
  );
}

/* ---------- sheet tabs and status bar ---------- */

const TABS: [string, string][] = [
  ["Intro", "bg-[#bfbfbf]"], ["개괄", "bg-[#ffff00]"], ["기후", "bg-[#ffff00]"], ["설정", "bg-[#ffff00]"], ["외피", "bg-[#ffff00]"],
  ["창호", "border-b-2 border-[#217346] bg-linear-to-b from-white to-[#ffff99] font-bold text-[#217346]"],
  ["환기", "bg-[#ffff00]"], ["요구량", "bg-[#f79646]"], ["계산흐름", "bg-[#f79646]"], ["부하", "bg-[#f79646]"],
  ["소요량", "bg-[#ffff00]"], ["신재생", "bg-[#92cddc]"], ["LCC", "bg-[#92cddc]"], ["DB", "bg-[#9bbb59]"], ["제품", "bg-[#9bbb59]"],
];

function SheetTabs() {
  return (
    <div className="flex h-7 shrink-0 items-start border-t border-[#ababab] bg-[#f5f5f5]">
      <div className="flex w-[99px] shrink-0 items-center gap-[25px] pt-2 pl-[26px]">
        <svg width="5" height="8" viewBox="0 0 5 8">
          <path d="M5 0v8L0 4z" fill="#b8b8b8" />
        </svg>
        <svg width="5" height="8" viewBox="0 0 5 8">
          <path d="M0 0v8l5-4z" fill="#b8b8b8" />
        </svg>
      </div>
      <div className="flex" role="tablist">
        {TABS.map(([t, c]) => (
          <div key={t} className="flex">
            <span className="mr-[3px] h-6 w-px bg-[#a0a0a0]" />
            <button role="tab" aria-selected={t === "창호"} className={"mr-0.5 h-6 px-[9px] text-[14px] leading-[22px] whitespace-nowrap " + c}>
              {t}
            </button>
          </div>
        ))}
        <span className="h-6 w-px bg-[#a0a0a0]" />
      </div>
      <button aria-label="새 시트" className="mt-1.5 ml-[33px]">
        <svg width="16" height="16" viewBox="0 0 16 16" fill="none" stroke="#c3c3c3">
          <circle cx="8" cy="8" r="7.3" />
          <path d="M8 4v8M4 8h8" strokeWidth="2" />
        </svg>
      </button>
      <div className="mt-1.5 mr-[21px] ml-auto flex items-center">
        <svg width="2" height="10" viewBox="0 0 2 10" className="mr-4">
          <path d="M0 0h2v2H0zM0 4h2v2H0zM0 8h2v2H0z" fill="#b0b0b0" />
        </svg>
        <button aria-label="왼쪽" className="flex h-[15px] w-[15px] items-center justify-center border border-[#ababab] bg-white">
          <svg width="4" height="7" viewBox="0 0 4 7">
            <path d="M4 0v7L0 3.5z" fill="#666" />
          </svg>
        </button>
        <div className="h-[15px] w-[366px] bg-[#e8e8e8]">
          <div className="h-full w-[137px] border border-[#ababab] bg-white" />
        </div>
        <button aria-label="오른쪽" className="flex h-[15px] w-[15px] items-center justify-center border border-[#ababab] bg-white">
          <svg width="4" height="7" viewBox="0 0 4 7">
            <path d="M0 0v7l4-3.5z" fill="#666" />
          </svg>
        </button>
      </div>
    </div>
  );
}

function StatusBar() {
  return (
    <footer className="flex h-[22px] shrink-0 items-center bg-[#217346] text-[13px] text-white">
      <span className="pl-[7px]">준비</span>
      <svg width="13" height="13" viewBox="0 0 13 13" className="ml-5" fill="none" stroke="#fff">
        <circle cx="3" cy="3" r="2.5" fill="#fff" />
        <path d="M6 1.5h6.5v11h-11V7M1.5 7h11M1.5 9.7h11M5 5v7M8.7 5v7" />
      </svg>
      <div className="ml-auto flex h-full items-center">
        <button aria-label="기본" className="flex h-full w-[38px] items-center justify-center bg-[#0a6332]">
          <svg width="13" height="12" viewBox="0 0 13 12" fill="none" stroke="#fff">
            <path d="M.5.5h12v11H.5zM.5 4.2h12M.5 7.8h12M4.5 0v12M8.5 0v12" />
          </svg>
        </button>
        <button aria-label="페이지 레이아웃" className="flex h-full w-[38px] items-center justify-center">
          <svg width="13" height="12" viewBox="0 0 13 12" fill="none" stroke="#fff">
            <path d="M.5.5h12v11H.5zM3.5 2.5h6v7h-6zM5 4.5h3M5 6.5h3" />
          </svg>
        </button>
        <button aria-label="페이지 나누기" className="flex h-full w-[38px] items-center justify-center">
          <svg width="13" height="12" viewBox="0 0 13 12" fill="none" stroke="#fff">
            <path d="M.5.5h12v11H.5z" />
            <path d="M1 1h3.5v7H1zM6 1h3v7H6z" fill="#fff" />
          </svg>
        </button>
        <span className="ml-1 h-0.5 w-1.5 bg-white" />
        <input
          type="range"
          min="0"
          max="200"
          defaultValue="100"
          aria-label="확대/축소"
          className="mx-1 h-3 w-[101px] appearance-none bg-[linear-gradient(#fff,#fff)] bg-[length:100%_1px] bg-center bg-no-repeat [&::-webkit-slider-thumb]:h-[11px] [&::-webkit-slider-thumb]:w-1 [&::-webkit-slider-thumb]:appearance-none [&::-webkit-slider-thumb]:bg-white"
        />
        <svg width="8" height="8" viewBox="0 0 8 8" stroke="#fff" strokeWidth="2">
          <path d="M4 0v8M0 4h8" />
        </svg>
        <span className="w-[59px] pr-2 text-right text-[13px]">100 %</span>
      </div>
    </footer>
  );
}

function VerticalScroll() {
  return (
    <div className="flex w-[21px] shrink-0 flex-col items-center justify-between bg-[#f3f3f3]">
      <div className="h-[12px] w-[15px] border border-t-0 border-[#ababab] bg-white" />
      <button aria-label="아래로" className="flex h-[15px] w-[15px] items-center justify-center border border-[#ababab] bg-white">
        <svg width="7" height="4" viewBox="0 0 7 4">
          <path d="M0 0h7L3.5 4z" fill="#777" />
        </svg>
      </button>
    </div>
  );
}

export default function App() {
  return (
    <div className="flex h-screen flex-col overflow-hidden bg-white font-['Open_Sans','Noto_Sans_CJK_KR',sans-serif] text-black">
      <Chrome />
      <ColumnHeads />
      <div className="flex min-h-0 flex-1">
        <RowHeads />
        <main className="flex min-w-0 flex-1 flex-col border-r border-[#ababab]">
          <div className="grid h-[298px] shrink-0 grid-cols-[447fr_38fr_742fr_638fr]">
            <DoorPanel />
            <div />
            <AnalysisPanel />
            <ResultPanel />
          </div>
          <WindowSection />
        </main>
        <VerticalScroll />
      </div>
      <SheetTabs />
      <StatusBar />
    </div>
  );
}
